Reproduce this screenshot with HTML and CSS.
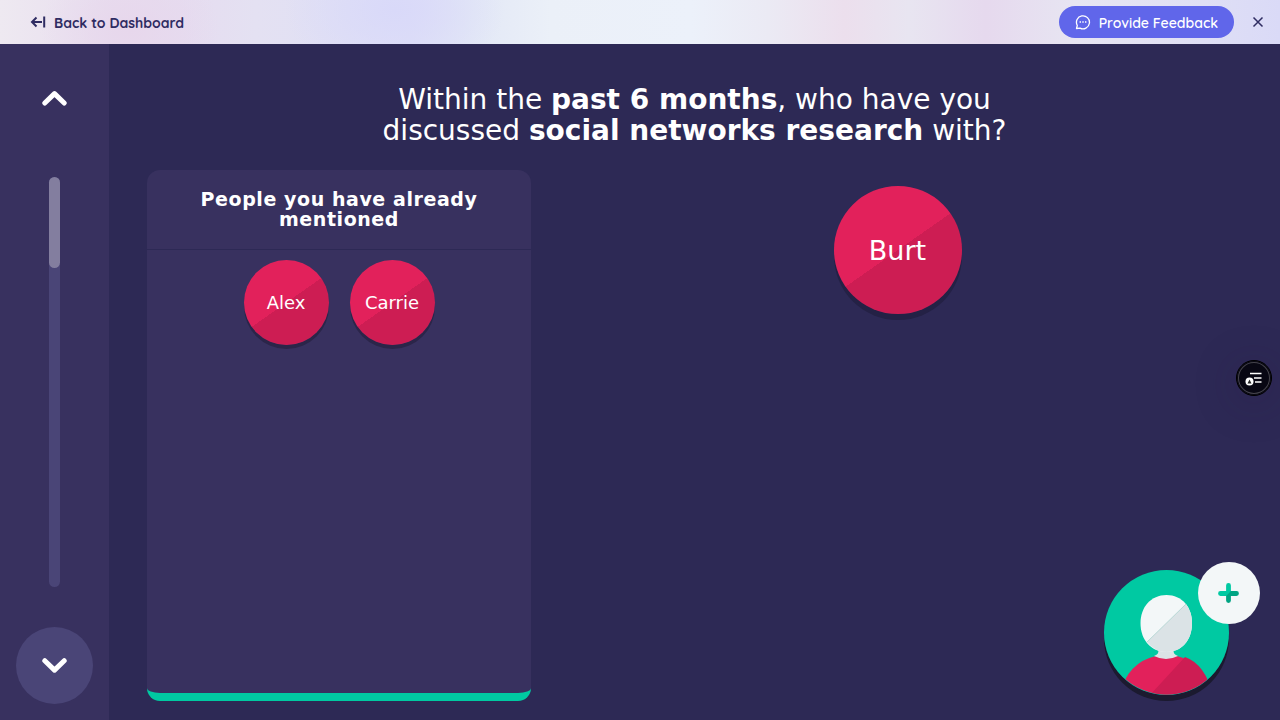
FILE: index.html
```html
<!DOCTYPE html>
<html lang="en">
<head>
<meta charset="utf-8">
<meta name="viewport" content="width=device-width, initial-scale=1">
<title>Name generator</title>
<link rel="stylesheet" href="styles.css">
</head>
<body>
<header class="topbar">
  <a class="back" href="#">
    <svg width="16" height="16" viewBox="0 0 16 16" fill="none" stroke="currentColor" stroke-width="2" aria-hidden="true"><path d="M12 8H2M6.500 3.500L2 8L6.500 12.500M14.200 2.500V13.500"/></svg>
    <span class="label">Back to Dashboard</span>
  </a>
  <div class="topbar-actions">
    <button class="feedback" type="button">
      <svg width="16" height="16" viewBox="0 0 16 16" fill="none" stroke="currentColor" stroke-width="1.300" stroke-linejoin="round" aria-hidden="true"><path d="M1.500 14.500L2.300 11.500A6.500 6.500 0 1 1 5 14.100Z"/><path d="M4.600 8h1.400M7.300 8h1.400M10 8h1.400"/></svg>
      <span class="label">Provide Feedback</span>
    </button>
    <button class="close" type="button" aria-label="Close">
      <svg width="12" height="12" viewBox="0 0 12 12" fill="none" stroke="currentColor" stroke-width="1.500" aria-hidden="true"><path d="M1.500 1.500L10.500 10.500M10.500 1.500L1.500 10.500"/></svg>
    </button>
  </div>
</header>
<div class="app">
  <nav class="rail" aria-label="Interview">
    <button class="rail-button" type="button" aria-label="Previous">
      <svg width="26" height="18" viewBox="0 0 26 18" aria-hidden="true"><path d="M2.800 13L12.500 3.600L22.200 13"/></svg>
    </button>
    <div class="track" role="progressbar" aria-label="Progress" aria-valuenow="22"><div class="track-fill" style="height:22.200%"></div></div>
    <button class="rail-button rail-button-next" type="button" aria-label="Next">
      <svg width="26" height="18" viewBox="0 0 26 18" aria-hidden="true"><path d="M2.800 3.700L12.500 13.100L22.200 3.700"/></svg>
    </button>
  </nav>
  <main class="stage">
    <h1 class="prompt">Within the <strong>past 6 months</strong>, who have you discussed <strong>social networks research</strong> with?</h1>
    <div class="columns">
      <section class="panel">
        <h2 class="panel-title">People you have already mentioned</h2>
        <div class="panel-nodes">
          <button class="node node-small" type="button">Alex</button>
          <button class="node node-small" type="button">Carrie</button>
        </div>
      </section>
      <section class="nodes" aria-label="People">
        <button class="node" type="button">Burt</button>
      </section>
    </div>
    <button class="add" type="button" aria-label="Add a person">
      <svg class="avatar" viewBox="0 0 125 125" aria-hidden="true">
        <defs>
          <clipPath id="disc"><circle cx="62.500" cy="62" r="62.500"/></clipPath>
        </defs>
        <circle cx="62.500" cy="62.500" r="62.500" fill="#00c9a2"/>
        <g clip-path="url(#disc)">
          <path d="M15 125Q24 92 52 86H73Q101 93 109 125Z" fill="#e2215b"/>
          <path d="M81 87L46 125H109Q101 94 81 87Z" fill="#cd1d53"/>
        </g>
        <path d="M54 79Q56 84 50 86Q62 92 74 86Q68 84 70 79Z" fill="#dbe3e6"/>
        <path d="M62.500 25C78 25 88 37 88 53C88 71 77 82 62.500 82C48 82 36.500 71 36.500 53C36.500 37 47 25 62.500 25Z" fill="#f3f7f8"/>
        <path d="M82 34Q88 42 88 53C88 71 77 82 62.500 82Q51 82 43 72Z" fill="#dbe3e6"/>
        <path d="M82 34L43 72" stroke="#8cc5bf" stroke-width="0.500"/>
      </svg>
      <span class="plus">
        <svg width="22" height="22" viewBox="0 0 22 22" fill="none" stroke-width="4.800" stroke-linecap="round" aria-hidden="true"><path d="M10.500 18.500V11.500H18.500" stroke="#00a483"/><path d="M10.500 3.500V11.500H2.500" stroke="#00c9a2"/><path d="M13 9L13 13.900H8.100Z" fill="#00a483"/></svg>
      </span>
    </button>
  </main>
</div>
<button class="widget" type="button" aria-label="Reading tools">
  <svg width="18" height="16" viewBox="0 0 18 16" aria-hidden="true"><path d="M5 3.500H16.500M9 8H16.500M10 12H16.500" stroke="#fff" stroke-width="1.500"/><circle cx="4.500" cy="11.500" r="4" fill="#fff"/><path d="M2.500 13.500H6.500L4.500 9.500Z" fill="#222"/></svg>
</button>
</body>
</html>
```
FILE: styles.css
```css
* {
  box-sizing: border-box;
}

body {
  margin: 0;
  height: 100vh;
  display: flex;
  flex-direction: column;
  background: #2d2955;
  color: #fff;
  font-family: "DejaVu Sans", sans-serif;
}

button {
  border: 0;
  padding: 0;
  background: none;
  color: inherit;
  font: inherit;
  cursor: pointer;
}

.topbar {
  height: 44px;
  flex: none;
  display: flex;
  align-items: center;
  justify-content: space-between;
  padding: 0 16px 0 30px;
  background:
    radial-gradient(ellipse 110px 70px at 395px 10px, #d9d9f9, transparent),
    radial-gradient(ellipse 90px 70px at 130px 30px, #e7d7ec, transparent),
    linear-gradient(90deg, #eee9f1 0%, #e8ddef 9%, #e6dcf0 14%, #e4e1f2 20%, #e0e0f5 27%, #dedff7 32%, #e3e8f6 37%, #ebf0f8 43%, #ecf1fa 54%, #ebeaf4 60%, #ecdfed 66%, #e8e5f1 71%, #e6d9ee 77%, #e7e5f2 84%, #dfdff5 94%, #dadaf7 100%);
  color: #2f2c62;
  font-family: Quicksand, Lato, sans-serif;
  font-size: 14px;
  font-weight: 600;
}

.back {
  display: flex;
  align-items: center;
  gap: 8px;
  color: inherit;
  font-weight: 700;
  text-decoration: none;
}

.label {
  padding-top: 2px;
}

.topbar-actions {
  display: flex;
  align-items: center;
  gap: 18px;
}

.feedback {
  display: flex;
  align-items: center;
  gap: 8px;
  height: 32px;
  padding: 0 16px;
  border-radius: 16px;
  background: #6066ea;
  color: #fff;
}

.close {
  display: flex;
}

.app {
  flex: 1;
  min-height: 0;
  display: flex;
}

.rail {
  width: 109px;
  flex: none;
  display: flex;
  flex-direction: column;
  align-items: center;
  gap: 40px;
  padding: 16px;
  background: #38315f;
}

.rail-button {
  width: 77px;
  height: 77px;
  flex: none;
  display: grid;
  place-items: center;
  border-radius: 50%;
}

.rail-button-next {
  background: #4a4577;
}

.rail-button path {
  fill: none;
  stroke: #fff;
  stroke-width: 5;
  stroke-linecap: round;
  stroke-linejoin: round;
}

.track {
  width: 11px;
  flex: 1;
  border-radius: 6px;
  background: #4a4577;
}

.track-fill {
  border-radius: 6px;
  background: #837e9f;
}

.stage {
  position: relative;
  flex: 1;
  min-width: 0;
  display: flex;
  flex-direction: column;
  gap: 24px;
  padding: 40px 38px 19px;
}

.prompt {
  margin: 0 auto;
  max-width: 660px;
  font-size: 28px;
  line-height: 31px;
  font-weight: 400;
  text-align: center;
}

.columns {
  flex: 1;
  min-height: 0;
  display: flex;
  gap: 22px;
}

.panel {
  width: 384px;
  flex: none;
  display: flex;
  flex-direction: column;
  border-bottom: 8px solid #00c9a2;
  border-radius: 13px;
  background: #38315f;
}

.panel-title {
  margin: 0;
  padding: 19px 48px 20px;
  border-bottom: 1px solid #2d2955;
  font-size: 19px;
  line-height: 20px;
  letter-spacing: 0.03em;
  text-align: center;
}

.panel-nodes {
  display: flex;
  flex-wrap: wrap;
  justify-content: center;
  gap: 21px;
  padding: 10px;
}

.nodes {
  flex: 1;
  display: flex;
  justify-content: center;
  align-items: flex-start;
  padding: 16px;
}

.node {
  width: 128px;
  height: 128px;
  border-radius: 50%;
  background: linear-gradient(145deg, #e2215b 50%, #cd1d53 50%);
  box-shadow: 0 6px 0 #242145;
  font-size: 27px;
}

.node-small {
  width: 85px;
  height: 85px;
  box-shadow: 0 4px 0 #2b2549;
  font-size: 18px;
}

.add {
  position: absolute;
  right: 51px;
  bottom: 25px;
  width: 125px;
  height: 125px;
  border-radius: 50%;
  box-shadow: 0 6px 0 #1b1a2f;
}

.avatar {
  display: block;
  width: 100%;
}

.plus {
  position: absolute;
  top: -8px;
  right: -31px;
  width: 62px;
  height: 62px;
  display: grid;
  place-items: center;
  border-radius: 50%;
  background: #f3f7f8;
}

.widget {
  position: fixed;
  right: 8px;
  top: 360px;
  width: 36px;
  height: 36px;
  display: grid;
  place-items: center;
  border: 1px solid #000;
  border-radius: 50%;
  background: #080713;
  box-shadow: inset 0 0 0 1px #080713, inset 0 0 0 2px #45444c, 0 6px 40px 6px rgba(40, 25, 65, 0.200);
}
```
